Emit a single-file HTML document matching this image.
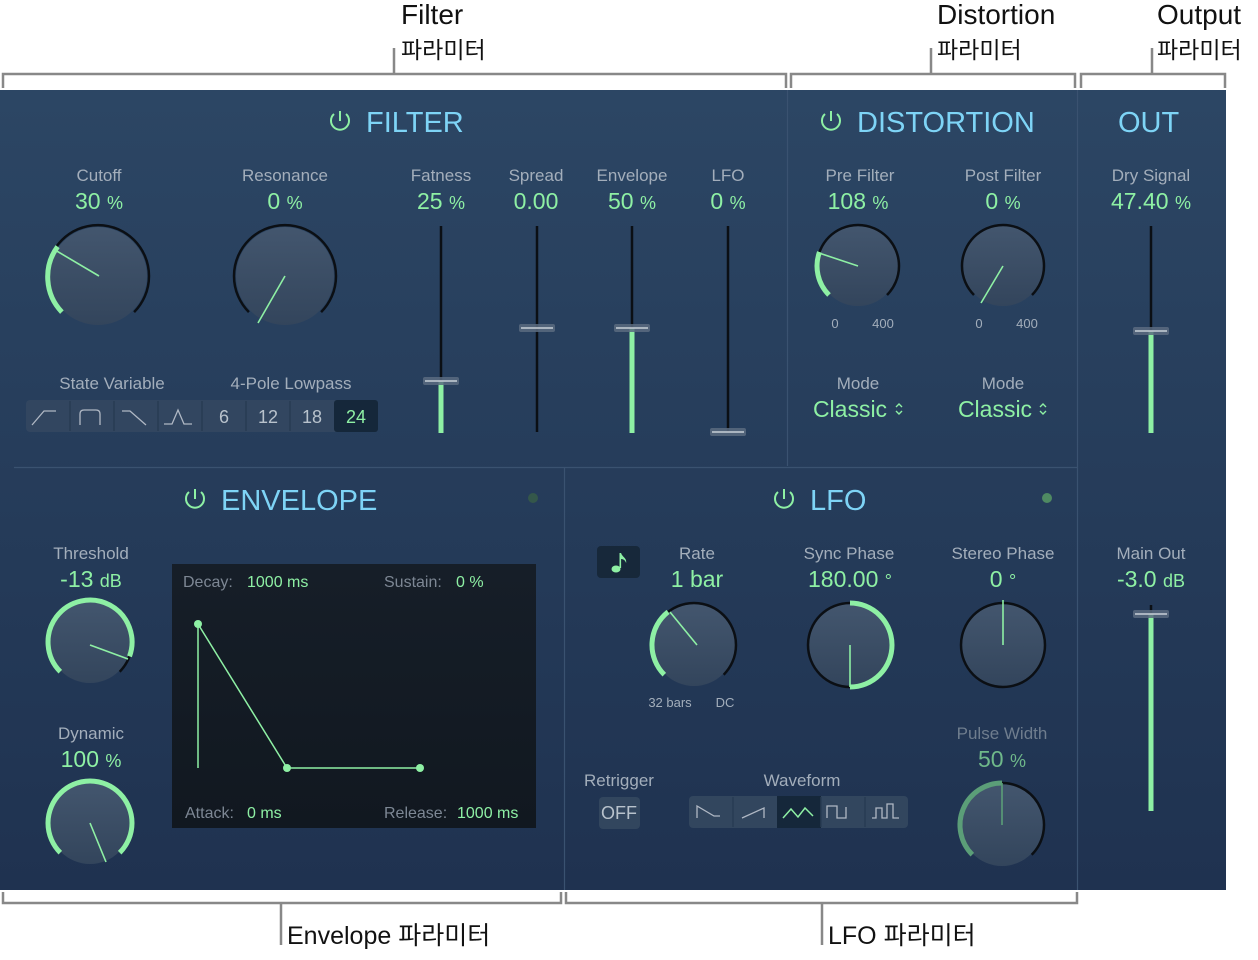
<!DOCTYPE html>
<html><head><meta charset="utf-8"><style>
html,body{margin:0;padding:0;background:#fff;width:1258px;height:960px;overflow:hidden}
text{font-family:"Liberation Sans","Noto Sans CJK KR",sans-serif}
.lb{fill:#a3aebb;font-size:17px;text-anchor:middle}
.vl{fill:#8ef0a4;font-size:23px;text-anchor:middle}
.vs{font-size:18px}
.tt{fill:#7ed4f6;font-size:29px}
.sm{fill:#a3aebb;font-size:13px;text-anchor:middle}
.an{fill:#111;font-size:28px}
.ak{fill:#111;font-size:23px}
.rim{fill:none;stroke:#0b0f14;stroke-width:2.5}
.grn{fill:none;stroke:#8ef0a4;stroke-width:5}
.ptr{stroke:#8ef0a4;stroke-width:1.6}
.body{fill:url(#kb)}
.br{fill:none;stroke:#888;stroke-width:2.5}
</style></head><body>
<svg width="1258" height="960" viewBox="0 0 1258 960" xmlns="http://www.w3.org/2000/svg">
<defs>
<linearGradient id="bg" x1="0" y1="0" x2="0" y2="1"><stop offset="0" stop-color="#2c4664"/><stop offset="1" stop-color="#1f3250"/></linearGradient>
<linearGradient id="kb" x1="0" y1="0" x2="0" y2="1"><stop offset="0" stop-color="#43566e"/><stop offset="1" stop-color="#33455c"/></linearGradient>
<linearGradient id="eb" x1="0" y1="0" x2="0" y2="1"><stop offset="0" stop-color="#161e28"/><stop offset="1" stop-color="#111820"/></linearGradient>
</defs>
<text class="an" x="401" y="24">Filter</text><text class="ak" x="401" y="58">파라미터</text>
<text class="an" x="937" y="24">Distortion</text><text class="ak" x="937" y="58">파라미터</text>
<text class="an" x="1157" y="24">Output</text><text class="ak" x="1157" y="58">파라미터</text>
<path class="br" d="M3 88V74H786V88M394 74V48M791 88V74H1075V88M931 74V48M1081 88V74H1225V88M1152 74V48"/>
<path class="br" d="M3 892V903H561V892M281 903V945M566 892V903H1077V892M822 903V945"/>
<text class="ak" x="287" y="944" style="font-size:25px">Envelope 파라미터</text>
<text class="ak" x="828" y="944" style="font-size:25px">LFO 파라미터</text>
<rect x="0" y="90" width="1226" height="800" fill="url(#bg)"/>
<path d="M787.5 90V466M14 467.5H1077M564.5 467V890M1077.5 90V890" stroke="#3a5270" stroke-width="1.2" fill="none"/>
<g fill="none" stroke="#8ef0a4" stroke-width="2"><path d="M334 114a9 9 0 1 0 12 0M340 111v10"/><path d="M825 114a9 9 0 1 0 12 0M831 111v10"/><path d="M189 492a9 9 0 1 0 12 0M195 489v10"/><path d="M778 492a9 9 0 1 0 12 0M784 489v10"/></g>
<text class="tt" x="366" y="132">FILTER</text>
<text class="tt" x="857" y="132">DISTORTION</text>
<text class="tt" x="1118" y="132">OUT</text>
<text class="tt" x="221" y="510">ENVELOPE</text>
<text class="tt" x="810" y="510">LFO</text>
<circle cx="533" cy="498" r="5" fill="#34574a"/><circle cx="1047" cy="498" r="5" fill="#4f8a62"/>
<text class="lb" x="99" y="181">Cutoff</text><text class="vl" x="99" y="209">30 <tspan class="vs">%</tspan></text>
<text class="lb" x="285" y="181">Resonance</text><text class="vl" x="285" y="209">0 <tspan class="vs">%</tspan></text>
<text class="lb" x="441" y="181">Fatness</text><text class="vl" x="441" y="209">25 <tspan class="vs">%</tspan></text>
<text class="lb" x="536" y="181">Spread</text><text class="vl" x="536" y="209">0.00</text>
<text class="lb" x="632" y="181">Envelope</text><text class="vl" x="632" y="209">50 <tspan class="vs">%</tspan></text>
<text class="lb" x="728" y="181">LFO</text><text class="vl" x="728" y="209">0 <tspan class="vs">%</tspan></text>
<circle class="body" cx="98" cy="276" r="49"/>
<path class="rim" d="M61.9 312.1A51 51 0 1 1 134.1 312.1"/>
<path class="grn" d="M61.9 312.1A51 51 0 0 1 57.6 246.6"/>
<line class="ptr" x1="99" y1="276" x2="55" y2="250"/>
<circle class="body" cx="285" cy="276" r="49"/>
<path class="rim" d="M248.9 312.1A51 51 0 1 1 321.1 312.1"/>
<line class="ptr" x1="285" y1="276" x2="258" y2="323"/>
<text class="lb" x="112" y="389">State Variable</text><text class="lb" x="291" y="389">4-Pole Lowpass</text>
<rect x="26" y="400" width="352" height="32" rx="4" fill="#324660"/>
<rect x="334" y="400" width="44" height="32" rx="3" fill="#15273a"/>
<g stroke="#283b53" stroke-width="1.5"><path d="M70 401v30M114 401v30M158 401v30M202 401v30M246 401v30M290 401v30"/></g>
<g fill="none" stroke="#b0b8c4" stroke-width="1.3"><path d="M32 425L44 411H56"/><path d="M80 425V414Q80 410 84 410H96Q100 410 100 414V425"/><path d="M122 411H130L146 425"/><path d="M164 424H172L178 410L184 424H192"/></g>
<g font-size="18" text-anchor="middle" fill="#b8c2cc"><text x="224" y="423">6</text><text x="268" y="423">12</text><text x="312" y="423">18</text><text x="356" y="423" fill="#8ef0a4">24</text></g>
<g stroke="#0b0f14" stroke-width="2.5"><path d="M441 226V432M537 226V432M632 226V432M728 226V432M1151 226V432M1151 605V810"/></g>
<g stroke="#8ef0a4" stroke-width="5"><path d="M441 381V433M632 328V433M1151 331V433M1151 614V811"/></g>
<g fill="#5a6b80" opacity="0.85"><rect x="423" y="377" width="36" height="8" rx="2"/><rect x="519" y="324" width="36" height="8" rx="2"/><rect x="614" y="324" width="36" height="8" rx="2"/><rect x="710" y="428" width="36" height="8" rx="2"/><rect x="1133" y="327" width="36" height="8" rx="2"/><rect x="1133" y="610" width="36" height="8" rx="2"/></g>
<g stroke="#c8d0d8" stroke-width="1.5"><path d="M425 381H457M521 328H553M616 328H648M712 432H744M1135 331H1167M1135 614H1167"/></g>
<text class="lb" x="860" y="181">Pre Filter</text><text class="vl" x="858" y="209">108 <tspan class="vs">%</tspan></text>
<text class="lb" x="1003" y="181">Post Filter</text><text class="vl" x="1003" y="209">0 <tspan class="vs">%</tspan></text>
<circle class="body" cx="858" cy="266" r="40"/>
<path class="rim" d="M829 295A41 41 0 1 1 887 295"/>
<path class="grn" d="M829 295A41 41 0 0 1 819.5 252"/>
<line class="ptr" x1="858" y1="266" x2="819" y2="253"/>
<circle class="body" cx="1003" cy="266" r="40"/>
<path class="rim" d="M974 295A41 41 0 1 1 1032 295"/>
<line class="ptr" x1="1003" y1="266" x2="981" y2="303"/>
<text class="sm" x="835" y="328">0</text><text class="sm" x="883" y="328">400</text>
<text class="sm" x="979" y="328">0</text><text class="sm" x="1027" y="328">400</text>
<text class="lb" x="858" y="389">Mode</text><text class="lb" x="1003" y="389">Mode</text>
<text class="vl" x="850" y="417">Classic</text><text class="vl" x="995" y="417">Classic</text>
<g fill="none" stroke="#8ef0a4" stroke-width="1.4"><path d="M896 407l3-3 3 3M896 411l3 3 3-3M1040 407l3-3 3 3M1040 411l3 3 3-3"/></g>
<text class="lb" x="1151" y="181">Dry Signal</text><text class="vl" x="1151" y="209">47.40 <tspan class="vs">%</tspan></text>
<text class="lb" x="1151" y="559">Main Out</text><text class="vl" x="1151" y="587">-3.0 <tspan class="vs">dB</tspan></text>
<text class="lb" x="91" y="559">Threshold</text><text class="vl" x="91" y="587">-13 <tspan class="vs">dB</tspan></text>
<text class="lb" x="91" y="739">Dynamic</text><text class="vl" x="91" y="767">100 <tspan class="vs">%</tspan></text>
<circle class="body" cx="90" cy="642" r="41"/>
<path class="rim" d="M60.3 671.7A42 42 0 1 1 119.7 671.7"/>
<path class="grn" d="M60.3 671.7A42 42 0 1 1 129.5 656.4"/>
<line class="ptr" x1="90" y1="645" x2="128" y2="659"/>
<circle class="body" cx="90" cy="823" r="41"/>
<path class="grn" d="M60.3 852.7A42 42 0 1 1 119.7 852.7"/>
<line class="ptr" x1="90" y1="823" x2="106" y2="862"/>
<rect x="172" y="564" width="364" height="264" fill="url(#eb)"/>
<g font-size="16"><text x="183" y="587" fill="#7d8794">Decay:</text><text x="247" y="587" fill="#8ef0a4">1000 ms</text>
<text x="384" y="587" fill="#7d8794">Sustain:</text><text x="456" y="587" fill="#8ef0a4">0 %</text>
<text x="185" y="818" fill="#7d8794">Attack:</text><text x="247" y="818" fill="#8ef0a4">0 ms</text>
<text x="384" y="818" fill="#7d8794">Release:</text><text x="457" y="818" fill="#8ef0a4">1000 ms</text></g>
<g stroke="#8ef0a4" stroke-width="1.5" fill="none"><path d="M198 624V768M198 624L287 768H420"/></g>
<g fill="#8ef0a4"><circle cx="198" cy="624" r="4"/><circle cx="287" cy="768" r="4"/><circle cx="420" cy="768" r="4"/></g>
<rect x="597" y="546" width="43" height="32" rx="4" fill="#17283a"/>
<g fill="#8ef0a4"><ellipse cx="616" cy="569" rx="4.5" ry="3.5"/><path d="M619.5 568V553h1.6c1 4 6 5 5 10c-1-3-3-4-5-4V568z"/></g>
<text class="lb" x="697" y="559">Rate</text><text class="vl" x="697" y="587">1 bar</text>
<text class="lb" x="849" y="559">Sync Phase</text><text class="vl" x="850" y="587">180.00 <tspan class="vs">°</tspan></text>
<text class="lb" x="1003" y="559">Stereo Phase</text><text class="vl" x="1003" y="587">0 <tspan class="vs">°</tspan></text>
<circle class="body" cx="694" cy="645" r="41"/>
<path class="rim" d="M664.3 674.7A42 42 0 1 1 723.7 674.7"/>
<path class="grn" d="M664.3 674.7A42 42 0 0 1 668.1 611.9"/>
<line class="ptr" x1="697" y1="645" x2="670" y2="612"/>
<text class="sm" x="670" y="707">32 bars</text><text class="sm" x="725" y="707">DC</text>
<circle class="body" cx="850" cy="645" r="41"/><circle class="rim" cx="850" cy="645" r="42"/>
<path class="grn" d="M850 603A42 42 0 0 1 850 687"/>
<line class="ptr" x1="850" y1="645" x2="850" y2="687"/>
<circle class="body" cx="1003" cy="645" r="41"/><circle class="rim" cx="1003" cy="645" r="42"/>
<line class="ptr" x1="1003" y1="645" x2="1003" y2="600"/>
<text class="lb" x="1002" y="739" style="fill:#6f7d8e">Pulse Width</text><text class="vl" x="1002" y="767" style="fill:#6fb88a">50 <tspan class="vs">%</tspan></text>
<circle class="body" cx="1002" cy="825" r="41"/>
<path class="rim" d="M1002 783A42 42 0 0 1 1031.7 854.7"/>
<path d="M972.3 854.7A42 42 0 0 1 1002 783" fill="none" stroke="#5b9e78" stroke-width="5"/>
<line x1="1002" y1="825" x2="1002" y2="783" stroke="#5b9e78" stroke-width="1.6"/>
<text class="lb" x="619" y="786">Retrigger</text>
<rect x="599" y="797" width="41" height="32" rx="4" fill="#32465e"/>
<text x="619" y="819" font-size="18" text-anchor="middle" fill="#b8c2cc">OFF</text>
<text class="lb" x="802" y="786">Waveform</text>
<rect x="689" y="796" width="219" height="32" rx="4" fill="#32465e"/>
<rect x="777" y="796" width="44" height="32" fill="#15273a"/>
<g stroke="#283b53" stroke-width="1.5"><path d="M733 797v30M821 797v30M865 797v30"/></g>
<g fill="none" stroke="#b0b8c4" stroke-width="1.3"><path d="M697 818V806L714 816H720"/><path d="M742 818L764 808V818"/><path d="M827 818V806H837V818H846V807"/><path d="M872 818H876V808H882V818H887V804H893V818H899"/></g>
<path d="M783 818L791 809L798 817L805 808L813 816" fill="none" stroke="#8ef0a4" stroke-width="1.5"/>
</svg>
</body></html>
